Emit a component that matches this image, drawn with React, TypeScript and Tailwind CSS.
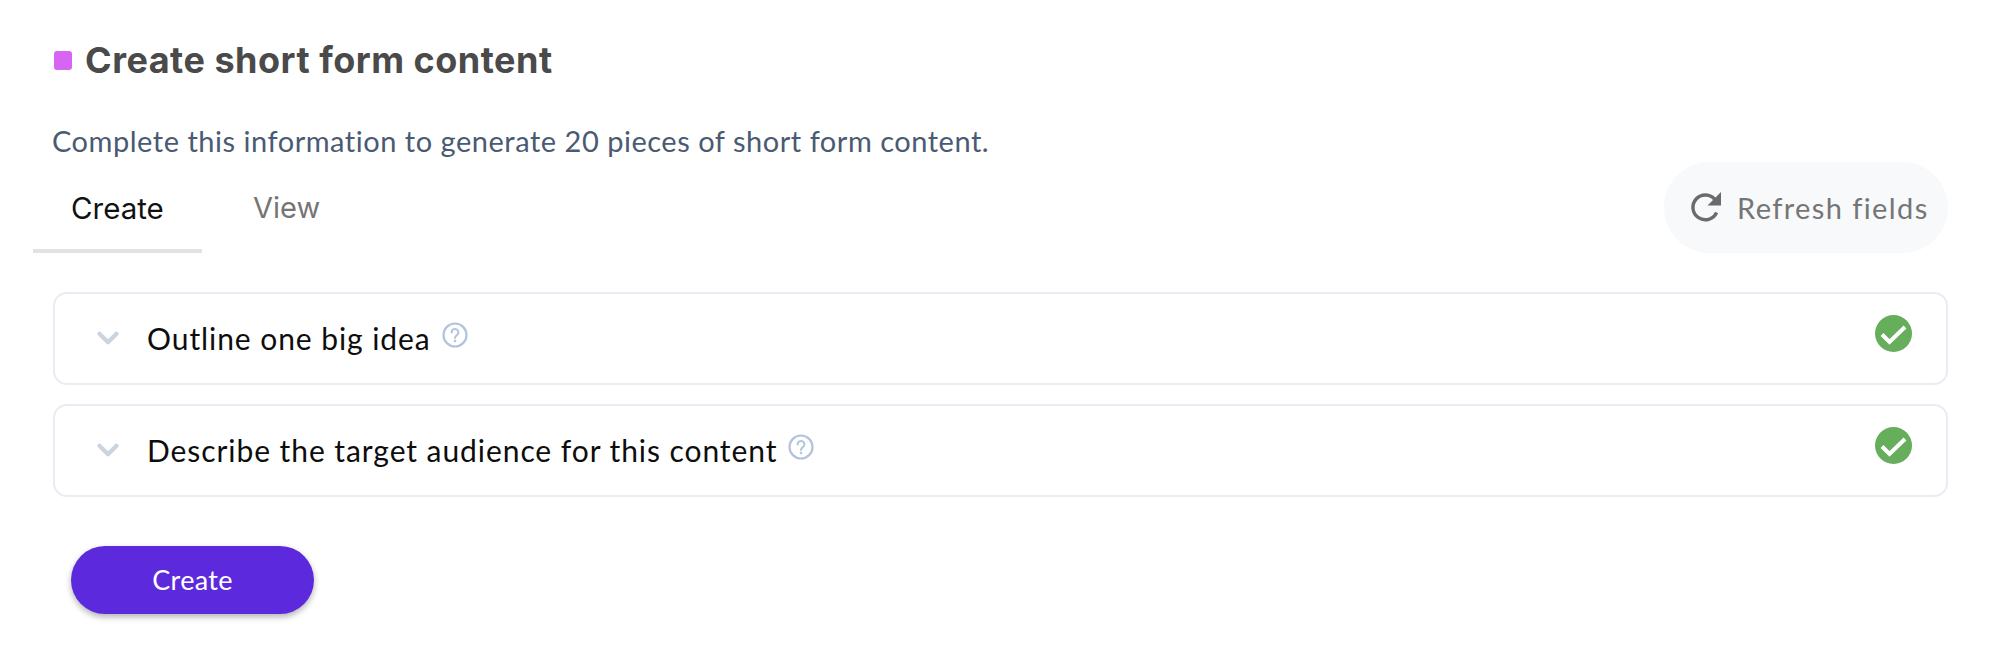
import React from "react";
import { ChevronDown } from "lucide-react";

const body = "font-['Lato','Liberation_Sans',sans-serif]";

function HelpIcon() {
  return (
    <svg viewBox="0 0 26 26" className="w-[26px] h-[26px] text-[#b3c3dc]" fill="none">
      <circle cx="13" cy="13" r="11.5" stroke="currentColor" strokeWidth="2.2" />
      <path d="M9.6 10.4a3.4 3.4 0 1 1 5.3 2.8c-1.2.8-1.9 1.4-1.9 2.8" stroke="currentColor" strokeWidth="2" strokeLinecap="round" />
      <circle cx="13" cy="19" r="1.3" fill="currentColor" />
    </svg>
  );
}

function CheckBadge() {
  return (
    <svg viewBox="0 0 37 37" className="w-[37px] h-[37px] shrink-0">
      <circle cx="18.5" cy="18.5" r="18.5" fill="#66ad5c" />
      <path d="M7 19.5l7.5 7.5L30 12" fill="none" stroke="#fff" strokeWidth="4" />
    </svg>
  );
}

function RefreshIcon() {
  return (
    <svg viewBox="0 0 32 32" className="w-[32px] h-[32px] text-[#6b6b6b] shrink-0" fill="none">
      <path d="M26.6 20.5A12.4 12.4 0 1 1 25 7.6" stroke="currentColor" strokeWidth="3.4" />
      <path d="M31 0v13.5H17.5z" fill="currentColor" />
    </svg>
  );
}

function FieldRow({ label }: { label: string }) {
  return (
    <div className="h-[93px] border-2 border-[#e8ecf3] rounded-[14px] flex items-start pl-[36px] pr-[34px]">
      <ChevronDown className="w-[34px] h-[34px] mt-[27px] text-[#cbd5e0] shrink-0" strokeWidth={3} />
      <div className="ml-[22px] mt-[24px] flex items-start">
        <span className={`${body} text-[30px] leading-[40px] tracking-[0.93px] text-[#0d0d0d]`}>{label}</span>
        <span className="ml-[11px] mt-[4px]"><HelpIcon /></span>
      </div>
      <div className="ml-auto mt-[21px]"><CheckBadge /></div>
    </div>
  );
}

export default function App() {
  return (
    <div className="w-[2000px] h-[671px] bg-white overflow-hidden pl-[53px] pr-[52px] pt-[37px]">
      <div className="flex items-center">
        <span className="w-[18px] h-[19px] rounded-[3px] bg-[#d864f4] ml-[1px]" />
        <h1 className="ml-[13px] font-['Inter','Liberation_Sans',sans-serif] font-bold text-[36px] leading-[46px] tracking-[0.5px] text-[#4a4a4a]">
          Create short form content
        </h1>
      </div>

      <p className={`${body} -ml-[1px] mt-[38px] text-[29px] leading-[40px] tracking-[0.52px] text-[#4a5a72]`}>
        Complete this information to generate 20 pieces of short form content.
      </p>

      <div className="mt-[1px] flex items-start justify-between">
        <div className="flex -ml-[20px]">
          <div className="w-[169px] h-[91px] border-b-4 border-[#e2e2e2] pl-[38px] pt-[26px] font-['Inter','Liberation_Sans',sans-serif] text-[29.5px] leading-[40px] text-[#111]">
            Create
          </div>
          <div className="pl-[51px] pt-[26px] font-['Inter','Liberation_Sans',sans-serif] text-[29px] leading-[40px] text-[#757575]">
            View
          </div>
        </div>
        <button className="w-[284px] h-[91px] rounded-full bg-[#f8f9fb] flex items-center pl-[26px]">
          <RefreshIcon />
          <span className={`${body} ml-[15px] text-[29px] leading-[40px] tracking-[1.4px] text-[#757575]`}>Refresh fields</span>
        </button>
      </div>

      <div className="mt-[39px] flex flex-col gap-[19px]">
        <FieldRow label="Outline one big idea" />
        <FieldRow label="Describe the target audience for this content" />
      </div>

      <button className={`mt-[49px] ml-[18px] w-[243px] h-[68px] rounded-full bg-[#5c2adc] shadow-[0_3px_6px_rgba(0,0,0,0.3)] text-white text-[27px] ${body} tracking-[0.3px]`}>
        Create
      </button>
    </div>
  );
}
